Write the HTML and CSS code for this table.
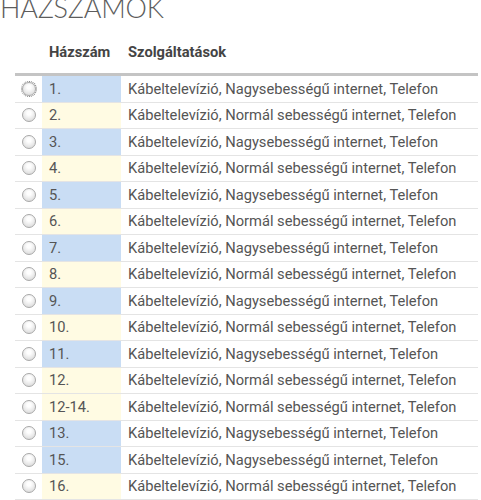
FILE: index.html
```html
<!DOCTYPE html>
<html lang="hu">
<head>
    <meta charset="UTF-8">
    <meta name="viewport" content="width=device-width, initial-scale=1.0">
    <title>Házszámok</title>
    <link rel="stylesheet" href="styles.css">
</head>
<body>

    <h1>HÁZSZÁMOK</h1>

    <table class="houses">
        <thead>
            <tr>
                <th class="pick"></th>
                <th class="num">Házszám</th>
                <th>Szolgáltatások</th>
            </tr>
        </thead>
        <tbody>
            <tr class="fast"><td class="pick"><span class="radio focus"></span></td><td class="num">1.</td><td>Kábeltelevízió, Nagysebességű internet, Telefon</td></tr>
            <tr class="normal"><td class="pick"><span class="radio"></span></td><td class="num">2.</td><td>Kábeltelevízió, Normál sebességű internet, Telefon</td></tr>
            <tr class="fast"><td class="pick"><span class="radio"></span></td><td class="num">3.</td><td>Kábeltelevízió, Nagysebességű internet, Telefon</td></tr>
            <tr class="normal"><td class="pick"><span class="radio"></span></td><td class="num">4.</td><td>Kábeltelevízió, Normál sebességű internet, Telefon</td></tr>
            <tr class="fast"><td class="pick"><span class="radio"></span></td><td class="num">5.</td><td>Kábeltelevízió, Nagysebességű internet, Telefon</td></tr>
            <tr class="normal"><td class="pick"><span class="radio"></span></td><td class="num">6.</td><td>Kábeltelevízió, Normál sebességű internet, Telefon</td></tr>
            <tr class="fast"><td class="pick"><span class="radio"></span></td><td class="num">7.</td><td>Kábeltelevízió, Nagysebességű internet, Telefon</td></tr>
            <tr class="normal"><td class="pick"><span class="radio"></span></td><td class="num">8.</td><td>Kábeltelevízió, Normál sebességű internet, Telefon</td></tr>
            <tr class="fast"><td class="pick"><span class="radio"></span></td><td class="num">9.</td><td>Kábeltelevízió, Nagysebességű internet, Telefon</td></tr>
            <tr class="normal"><td class="pick"><span class="radio"></span></td><td class="num">10.</td><td>Kábeltelevízió, Normál sebességű internet, Telefon</td></tr>
            <tr class="fast"><td class="pick"><span class="radio"></span></td><td class="num">11.</td><td>Kábeltelevízió, Nagysebességű internet, Telefon</td></tr>
            <tr class="normal"><td class="pick"><span class="radio"></span></td><td class="num">12.</td><td>Kábeltelevízió, Normál sebességű internet, Telefon</td></tr>
            <tr class="normal"><td class="pick"><span class="radio"></span></td><td class="num">12-14.</td><td>Kábeltelevízió, Normál sebességű internet, Telefon</td></tr>
            <tr class="fast"><td class="pick"><span class="radio"></span></td><td class="num">13.</td><td>Kábeltelevízió, Nagysebességű internet, Telefon</td></tr>
            <tr class="fast"><td class="pick"><span class="radio"></span></td><td class="num">15.</td><td>Kábeltelevízió, Nagysebességű internet, Telefon</td></tr>
            <tr class="normal"><td class="pick"><span class="radio"></span></td><td class="num">16.</td><td>Kábeltelevízió, Normál sebességű internet, Telefon</td></tr>
        </tbody>
    </table>

</body>
</html>
```

FILE: styles.css
```css
body {
    margin: 0;
    padding: 0 3px 0 15px;
    font-family: Roboto, "Liberation Sans", sans-serif;
    color: #555;
    background: #fff;
}
h1 {
    margin: -7px 0 0 -15px;
    font-family: Lato, "Open Sans", sans-serif;
    font-weight: 300;
    font-size: 27px;
    line-height: 30px;
    letter-spacing: -0.2px;
    color: #5c5c5c;
}
.houses {
    width: 100%;
    margin-top: 18px;
    border-collapse: collapse;
    font-size: 14.7px;
}
.houses th {
    text-align: left;
    font-weight: bold;
    color: #444;
    padding: 0 7px 10px;
    height: 22px;
    border-bottom: 3px solid #c4c4c4;
}
.houses td {
    height: 25.5px;
    padding: 0 7px;
    border-bottom: 1px solid #e4e4e4;
}
.houses .pick {
    width: 13px;
    padding: 0 6px 0 7px;
    text-align: center;
}
.houses .num {
    width: 65px;
}
.fast .num {
    background: #c9ddf4;
}
.normal .num {
    background: #fffbe3;
}
.radio {
    display: block;
    width: 12px;
    height: 12px;
    border-radius: 50%;
    border: 1px solid #a9a9a9;
    background: radial-gradient(circle at 50% 35%, #fefefe 20%, #d2d2d2 100%);
}
.radio.focus {
    outline: 1px dotted #777;
    outline-offset: 0;
}
```
